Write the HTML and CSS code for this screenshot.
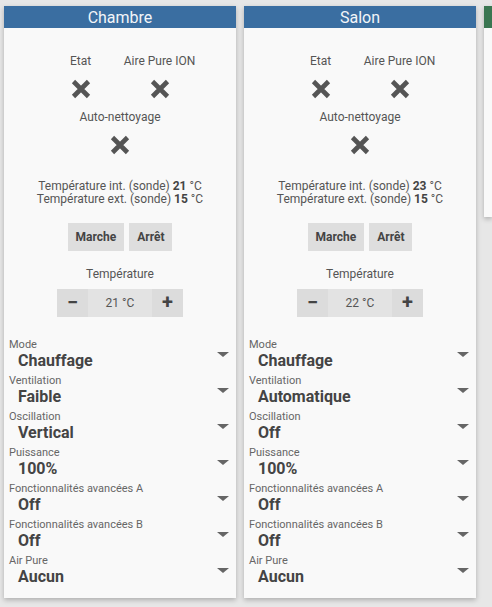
FILE: index.html
```html
<!DOCTYPE html>
<html>
<head>
<meta charset="utf-8">
<link rel="stylesheet" href="styles.css">
</head>
<body>
<div class="board">
  <div class="card">
    <div class="head">Chambre</div>
    <div class="body">
      <div class="pair">
        <div class="item"><div class="lbl">Etat</div><svg class="x" viewBox="0 0 22 22"><path d="M3.5 3.5L18.5 18.5M18.5 3.5L3.5 18.5"/></svg></div>
        <div class="item"><div class="lbl">Aire Pure ION</div><svg class="x" viewBox="0 0 22 22"><path d="M3.5 3.5L18.5 18.5M18.5 3.5L3.5 18.5"/></svg></div>
      </div>
      <div class="single">
        <div class="item"><div class="lbl">Auto-nettoyage</div><svg class="x" viewBox="0 0 22 22"><path d="M3.5 3.5L18.5 18.5M18.5 3.5L3.5 18.5"/></svg></div>
      </div>
      <div class="temps">
        <div>Température int. (sonde) <b>21</b> °C</div>
        <div>Température ext. (sonde) <b>15</b> °C</div>
      </div>
      <div class="btns"><span class="btn">Marche</span><span class="btn">Arrêt</span></div>
      <div class="tlabel">Température</div>
      <div class="stepper"><span class="sb">&#8722;</span><span class="sv">21 °C</span><span class="sb">+</span></div>
      <div class="selects">
        <div class="sel"><div class="sl">Mode</div><div class="svl">Chauffage</div><span class="arr"></span></div>
        <div class="sel"><div class="sl">Ventilation</div><div class="svl">Faible</div><span class="arr"></span></div>
        <div class="sel"><div class="sl">Oscillation</div><div class="svl">Vertical</div><span class="arr"></span></div>
        <div class="sel"><div class="sl">Puissance</div><div class="svl">100%</div><span class="arr"></span></div>
        <div class="sel"><div class="sl">Fonctionnalités avancées A</div><div class="svl">Off</div><span class="arr"></span></div>
        <div class="sel"><div class="sl">Fonctionnalités avancées B</div><div class="svl">Off</div><span class="arr"></span></div>
        <div class="sel"><div class="sl">Air Pure</div><div class="svl">Aucun</div><span class="arr"></span></div>
      </div>
    </div>
  </div>
  <div class="card">
    <div class="head">Salon</div>
    <div class="body">
      <div class="pair">
        <div class="item"><div class="lbl">Etat</div><svg class="x" viewBox="0 0 22 22"><path d="M3.5 3.5L18.5 18.5M18.5 3.5L3.5 18.5"/></svg></div>
        <div class="item"><div class="lbl">Aire Pure ION</div><svg class="x" viewBox="0 0 22 22"><path d="M3.5 3.5L18.5 18.5M18.5 3.5L3.5 18.5"/></svg></div>
      </div>
      <div class="single">
        <div class="item"><div class="lbl">Auto-nettoyage</div><svg class="x" viewBox="0 0 22 22"><path d="M3.5 3.5L18.5 18.5M18.5 3.5L3.5 18.5"/></svg></div>
      </div>
      <div class="temps">
        <div>Température int. (sonde) <b>23</b> °C</div>
        <div>Température ext. (sonde) <b>15</b> °C</div>
      </div>
      <div class="btns"><span class="btn">Marche</span><span class="btn">Arrêt</span></div>
      <div class="tlabel">Température</div>
      <div class="stepper"><span class="sb">&#8722;</span><span class="sv">22 °C</span><span class="sb">+</span></div>
      <div class="selects">
        <div class="sel"><div class="sl">Mode</div><div class="svl">Chauffage</div><span class="arr"></span></div>
        <div class="sel"><div class="sl">Ventilation</div><div class="svl">Automatique</div><span class="arr"></span></div>
        <div class="sel"><div class="sl">Oscillation</div><div class="svl">Off</div><span class="arr"></span></div>
        <div class="sel"><div class="sl">Puissance</div><div class="svl">100%</div><span class="arr"></span></div>
        <div class="sel"><div class="sl">Fonctionnalités avancées A</div><div class="svl">Off</div><span class="arr"></span></div>
        <div class="sel"><div class="sl">Fonctionnalités avancées B</div><div class="svl">Off</div><span class="arr"></span></div>
        <div class="sel"><div class="sl">Air Pure</div><div class="svl">Aucun</div><span class="arr"></span></div>
      </div>
    </div>
  </div>
  <div class="card short">
    <div class="head green"></div>
    <div class="body"></div>
  </div>
</div>
</body>
</html>
```
FILE: styles.css
```css
html, body {
  margin: 0;
  padding: 0;
  background: #e7e7e7;
  font-family: Roboto, "Liberation Sans", sans-serif;
  color: #555;
  overflow: hidden;
}
.board {
  display: flex;
  align-items: flex-start;
  gap: 8px;
  padding: 6px 0 12px 4px;
  width: 488px;
  overflow: hidden;
}
.card {
  width: 232px;
  flex: none;
  background: #f9f9f9;
  box-shadow: 0 2px 5px rgba(0,0,0,0.25);
}
.short {
  width: 8px;
}
.head {
  height: 22px;
  line-height: 23px;
  background: #3a6ea1;
  color: #f2f5f8;
  text-align: center;
  font-size: 16px;
  font-weight: 400;
}
.head.green { background: #3a7651; }
.body {
  padding: 26px 0 7px;
}
.short .body { height: 189px; padding: 0; }
.pair, .single {
  display: flex;
  justify-content: center;
}
.item {
  width: 79px;
  display: flex;
  flex-direction: column;
  align-items: center;
}
.lbl {
  font-size: 12px;
  line-height: 15px;
  color: #555;
  white-space: nowrap;
}
.x {
  width: 22px;
  height: 22px;
  margin-top: 9px;
  fill: none;
  stroke: #555;
  stroke-width: 4.6;
}
.single { margin-top: 10px; }
.temps {
  margin-top: 24px;
  text-align: center;
  font-size: 12px;
  line-height: 13px;
  color: #555;
}
.temps b { color: #444; }
.btns {
  display: flex;
  justify-content: center;
  gap: 5px;
  margin-top: 17px;
}
.btn {
  background: #dedede;
  font-weight: bold;
  font-size: 12px;
  color: #444;
  height: 28px;
  line-height: 28px;
  padding: 0 8px;
}
.tlabel {
  margin-top: 16px;
  text-align: center;
  font-size: 12px;
  line-height: 15px;
}
.stepper {
  display: flex;
  justify-content: center;
  margin-top: 7px;
  height: 28px;
}
.sb {
  width: 31px;
  background: #dcdcdc;
  text-align: center;
  font-size: 20px;
  line-height: 27px;
  font-weight: bold;
  color: #444;
}
.sv {
  width: 64px;
  background: #e3e3e3;
  text-align: center;
  font-size: 12px;
  line-height: 28px;
  color: #555;
}
.selects {
  margin-top: 22px;
}
.sel {
  position: relative;
  height: 36px;
  padding-left: 5px;
}
.sl {
  font-size: 11px;
  line-height: 12px;
  color: #666;
}
.svl {
  font-size: 16px;
  line-height: 19px;
  font-weight: bold;
  color: #444;
  padding-left: 9px;
}
.arr {
  position: absolute;
  right: 7px;
  top: 13px;
  width: 0;
  height: 0;
  border-left: 6px solid transparent;
  border-right: 6px solid transparent;
  border-top: 5px solid #666;
}
```
